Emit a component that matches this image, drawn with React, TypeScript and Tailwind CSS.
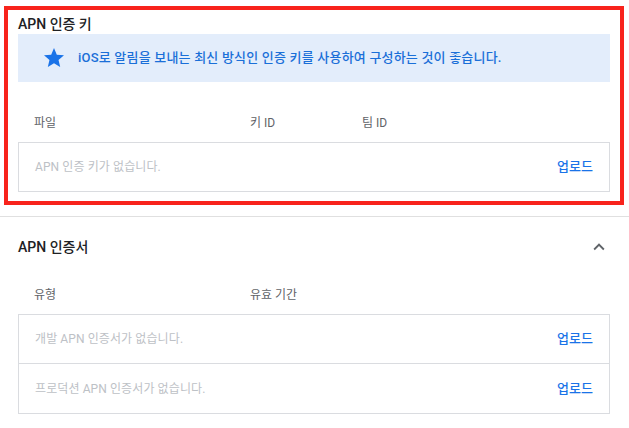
import React from "react";

const font = { fontFamily: '"Roboto", "Noto Sans CJK KR", sans-serif' };

function Star() {
  return (
    <svg width="24" height="24" viewBox="0 0 24 24" className="shrink-0">
      <path fill="#1a73e8" d="M12 17.27L18.18 21l-1.64-7.03L22 9.24l-7.19-.61L12 2 9.19 8.63 2 9.24l5.46 4.73L5.82 21z" />
    </svg>
  );
}

function ChevronUp() {
  return (
    <svg width="22" height="22" viewBox="0 0 24 24">
      <path fill="#5f6368" d="M12 8l-6 6 1.41 1.41L12 10.83l4.59 4.58L18 14z" />
    </svg>
  );
}

function Row({ text, last, tall }: { text: string; last?: boolean; tall?: boolean }) {
  return (
    <div
      className={`flex ${tall ? "h-[49px]" : "h-[48px]"} items-center justify-between pl-[16px] pr-[16px] ${
        last ? "" : "border-b border-[#dadce0]"
      }`}
    >
      <span className="text-[12px] tracking-[0.1px] text-[#bdc1c6]">{text}</span>
      <span className="text-[13px] font-medium text-[#1a73e8]">업로드</span>
    </div>
  );
}

export default function App() {
  return (
    <div className="w-[629px] h-[428px] bg-white overflow-hidden" style={font}>
      <div className="pt-[6px] pl-[4px] pr-[5px]">
        <div className="border-4 border-[#f8231c] pt-[4px] pl-[10px] pr-[10px] pb-[9px]">
          <div className="h-[20px] leading-[20px] text-[14px] font-medium text-[#202124]">APN 인증 키</div>
          <div className="flex h-[48px] items-center bg-[#e3edfb] pl-[24px]">
            <Star />
            <span className="ml-[12px] text-[13px] tracking-[0.2px] font-medium text-[#1a6fd8]">
              iOS로 알림을 보내는 최신 방식인 인증 키를 사용하여 구성하는 것이 좋습니다.
            </span>
          </div>
          <div className="mt-[31px] flex h-[20px] items-center text-[12px] text-[#5f6368]">
            <span className="ml-[16px] w-[216px]">파일</span>
            <span className="w-[112px]">키 ID</span>
            <span>팀 ID</span>
          </div>
          <div className="mt-[9px] border border-[#dadce0]">
            <Row text="APN 인증 키가 없습니다." last />
          </div>
        </div>
      </div>
      <div className="mt-[11px] border-t border-[#e0e0e0]" />
      <div className="pl-[18px] pr-[19px]">
        <div className="mt-[20px] flex h-[20px] items-center justify-between">
          <span className="text-[14px] font-medium text-[#202124]">APN 인증서</span>
          <ChevronUp />
        </div>
        <div className="mt-[28px] flex h-[20px] items-center text-[12px] text-[#5f6368]">
          <span className="ml-[16px] w-[216px]">유형</span>
          <span>유효 기간</span>
        </div>
        <div className="mt-[9px] border border-[#dadce0]">
          <Row text="개발 APN 인증서가 없습니다." tall />
          <Row text="프로덕션 APN 인증서가 없습니다." last tall />
        </div>
      </div>
    </div>
  );
}
